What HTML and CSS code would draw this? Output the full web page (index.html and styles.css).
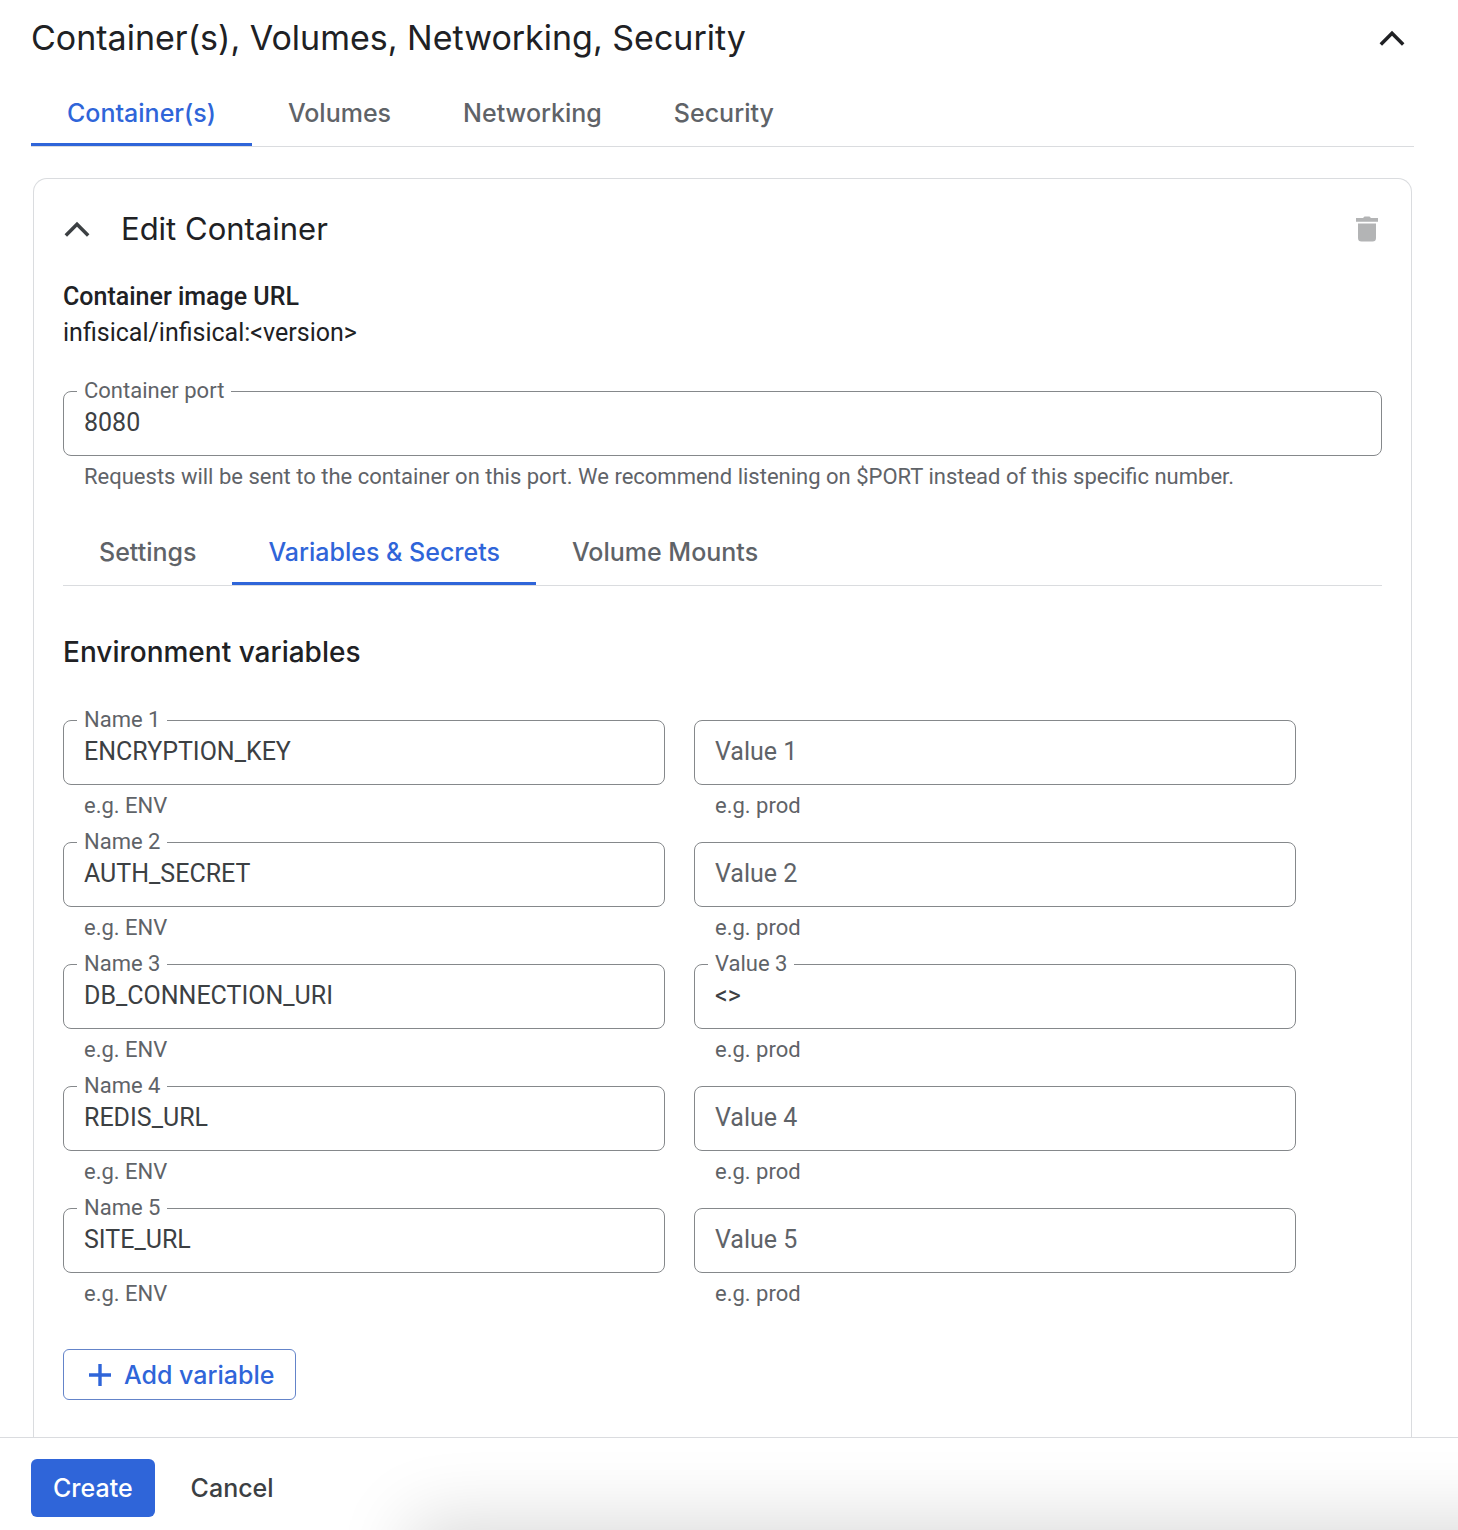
FILE: index.html
```html
<!DOCTYPE html>
<html lang="en">
<head>
<meta charset="utf-8">
<meta name="viewport" content="width=device-width, initial-scale=1">
<title>Edit container</title>
<link rel="stylesheet" href="styles.css">
</head>
<body>
<main class="page">
  <header class="section-head">
    <h1 class="section-title">Container(s), Volumes, Networking, Security</h1>
    <button class="icon-button" type="button" aria-label="Collapse section">
      <svg class="icon" viewBox="0 0 32 32" aria-hidden="true"><path d="M4.800 22.500 16 11.300 27.200 22.500" fill="none" stroke="currentColor" stroke-width="3.500"/></svg>
    </button>
  </header>

  <nav class="tabs" aria-label="Service sections">
    <button class="tab tab-active" type="button">Container(s)</button>
    <button class="tab" type="button">Volumes</button>
    <button class="tab" type="button">Networking</button>
    <button class="tab" type="button">Security</button>
  </nav>

  <section class="card">
    <header class="card-head">
      <button class="icon-button icon-soft" type="button" aria-label="Collapse container">
        <svg class="icon" viewBox="0 0 32 32" aria-hidden="true"><path d="M4.800 22.500 16 11.300 27.200 22.500" fill="none" stroke="currentColor" stroke-width="3.500"/></svg>
      </button>
      <h2 class="card-title">Edit Container</h2>
      <button class="icon-button icon-disabled" type="button" aria-label="Delete container" disabled>
        <svg class="icon" viewBox="0 0 32 32" aria-hidden="true"><path d="M5 5h7l1.500-1.500h5L20 5h7v3.700H5zM7 10.500h18v14.500a3.500 3.500 0 0 1-3.500 3.500h-11A3.500 3.500 0 0 1 7 25z" fill="currentColor"/></svg>
      </button>
    </header>

    <dl class="image-url">
      <dt>Container image URL</dt>
      <dd>infisical/infisical:&lt;version&gt;</dd>
    </dl>

    <div class="field">
      <label class="field-label" for="port">Container port</label>
      <input class="field-input" id="port" type="text" value="8080">
      <p class="field-hint">Requests will be sent to the container on this port. We recommend listening on $PORT instead of this specific number.</p>
    </div>

    <nav class="tabs tabs-inner" aria-label="Container sections">
      <button class="tab" type="button">Settings</button>
      <button class="tab tab-active" type="button">Variables &amp; Secrets</button>
      <button class="tab" type="button">Volume Mounts</button>
    </nav>

    <h3 class="group-title">Environment variables</h3>

    <div class="variables">
      <div class="field"><label class="field-label" for="n1">Name 1</label><input class="field-input" id="n1" type="text" value="ENCRYPTION_KEY"><p class="field-hint">e.g. ENV</p></div>
      <div class="field"><input class="field-input" type="text" placeholder="Value 1" aria-label="Value 1"><p class="field-hint">e.g. prod</p></div>
      <div class="field"><label class="field-label" for="n2">Name 2</label><input class="field-input" id="n2" type="text" value="AUTH_SECRET"><p class="field-hint">e.g. ENV</p></div>
      <div class="field"><input class="field-input" type="text" placeholder="Value 2" aria-label="Value 2"><p class="field-hint">e.g. prod</p></div>
      <div class="field"><label class="field-label" for="n3">Name 3</label><input class="field-input" id="n3" type="text" value="DB_CONNECTION_URI"><p class="field-hint">e.g. ENV</p></div>
      <div class="field"><label class="field-label" for="v3">Value 3</label><input class="field-input" id="v3" type="text" value="&lt;&gt;"><p class="field-hint">e.g. prod</p></div>
      <div class="field"><label class="field-label" for="n4">Name 4</label><input class="field-input" id="n4" type="text" value="REDIS_URL"><p class="field-hint">e.g. ENV</p></div>
      <div class="field"><input class="field-input" type="text" placeholder="Value 4" aria-label="Value 4"><p class="field-hint">e.g. prod</p></div>
      <div class="field"><label class="field-label" for="n5">Name 5</label><input class="field-input" id="n5" type="text" value="SITE_URL"><p class="field-hint">e.g. ENV</p></div>
      <div class="field"><input class="field-input" type="text" placeholder="Value 5" aria-label="Value 5"><p class="field-hint">e.g. prod</p></div>
    </div>

    <button class="button button-outline" type="button">
      <svg class="plus" viewBox="0 0 22 22" aria-hidden="true"><path d="M11 0v22M0 11h22" fill="none" stroke="currentColor" stroke-width="3.400"/></svg>
      Add variable
    </button>
  </section>
</main>

<footer class="actions">
  <button class="button button-primary" type="button">Create</button>
  <button class="button button-text" type="button">Cancel</button>
</footer>
</body>
</html>
```
FILE: styles.css
```css
:root {
  --display: "Google Sans", Inter, sans-serif;
  --text: Roboto, sans-serif;
  --ink: #202124;
  --ink-soft: #3c4043;
  --muted: #5f6368;
  --blue: #2f65d9;
  --line: #dadcdf;
  --outline: #85888b;
}

* { box-sizing: border-box; }

body {
  margin: 0;
  min-height: 100vh;
  display: flex;
  flex-direction: column;
  background: #fff;
  color: var(--ink);
  font: 25px/36px var(--text);
}

button, input { font: inherit; color: inherit; }
button { cursor: pointer; }
h1, h2, h3, dl, dd, p { margin: 0; }

.page {
  flex: 1;
  display: flex;
  flex-direction: column;
  padding: 12px 44px 0 31px;
}

.section-head {
  display: flex;
  align-items: center;
  justify-content: space-between;
  height: 52px;
  padding-right: 6px;
}

.section-title { font: 400 34px/52px var(--display); }

.icon-button {
  display: flex;
  padding: 0;
  border: 0;
  background: none;
}
.icon { width: 32px; height: 32px; }
.icon-soft { color: var(--ink-soft); }
.icon-disabled { color: #b3b4b5; }

.tabs {
  display: flex;
  margin-top: 18px;
  border-bottom: 1px solid var(--line);
}
.tabs-inner { margin-top: 29px; }

.tab {
  height: 64px;
  padding: 0 36px;
  border: 0;
  border-bottom: 3px solid transparent;
  background: none;
  color: var(--muted);
  font: 500 25px/32px var(--display);
}
.tab-active { color: var(--blue); border-color: var(--blue); }

.card {
  flex: 1;
  margin: 31px 2px 0;
  padding: 29px 29px 37px;
  border: 1px solid var(--line);
  border-bottom: 0;
  border-radius: 14px 14px 0 0;
}

.card-head {
  display: flex;
  align-items: center;
  gap: 28px;
  height: 42px;
  margin: 0 -1px 0 -2px;
}
.card-title { flex: 1; font: 400 31px/42px var(--display); }

.image-url { margin: 29px 0 40px; }
.image-url dt { font-weight: 500; }

.field { position: relative; }

.field-label {
  position: absolute;
  top: -15px;
  left: 14px;
  padding: 0 7px;
  background: #fff;
  color: var(--muted);
  font-size: 22px;
  line-height: 30px;
}

.field-input {
  display: block;
  width: 100%;
  height: 65px;
  padding: 0 20px 2px;
  border: 1px solid var(--outline);
  border-radius: 8px;
  background: none;
  color: var(--ink-soft);
}
.field-input::placeholder { color: var(--muted); opacity: 1; }

.field-hint {
  padding: 6px 21px 0;
  color: var(--muted);
  font-size: 22px;
  line-height: 30px;
}

.group-title {
  margin: 46px 0 48px;
  font: 500 28px/40px var(--display);
}

.variables {
  display: grid;
  grid-template-columns: 1fr 1fr;
  gap: 21px 29px;
  padding-right: 86px;
}

.button {
  display: inline-flex;
  align-items: center;
  justify-content: center;
  height: 58px;
  padding: 0 22px;
  border: 0;
  border-radius: 6px;
  background: none;
  font: 500 25px/32px var(--display);
}
.button-outline {
  height: 51px;
  margin-top: 40px;
  padding: 0 21px 0 25px;
  gap: 13px;
  border: 1px solid #6484c9;
  color: var(--blue);
}
.plus { width: 22px; height: 22px; }
.button-primary { background: var(--blue); color: #fff; }
.button-text { padding: 0 36px; color: var(--ink-soft); }

.actions {
  position: relative;
  display: flex;
  padding: 21px 31px 13px;
  border-top: 1px solid var(--line);
  background: #fff;
  overflow: hidden;
}

/* Soft shade rising from the lower edge of the action bar */
.actions::after {
  content: "";
  position: absolute;
  top: 100%;
  left: 420px;
  right: -100px;
  height: 100px;
  box-shadow: 0 0 72px 10px rgba(0, 0, 0, 0.15);
  pointer-events: none;
}
```
